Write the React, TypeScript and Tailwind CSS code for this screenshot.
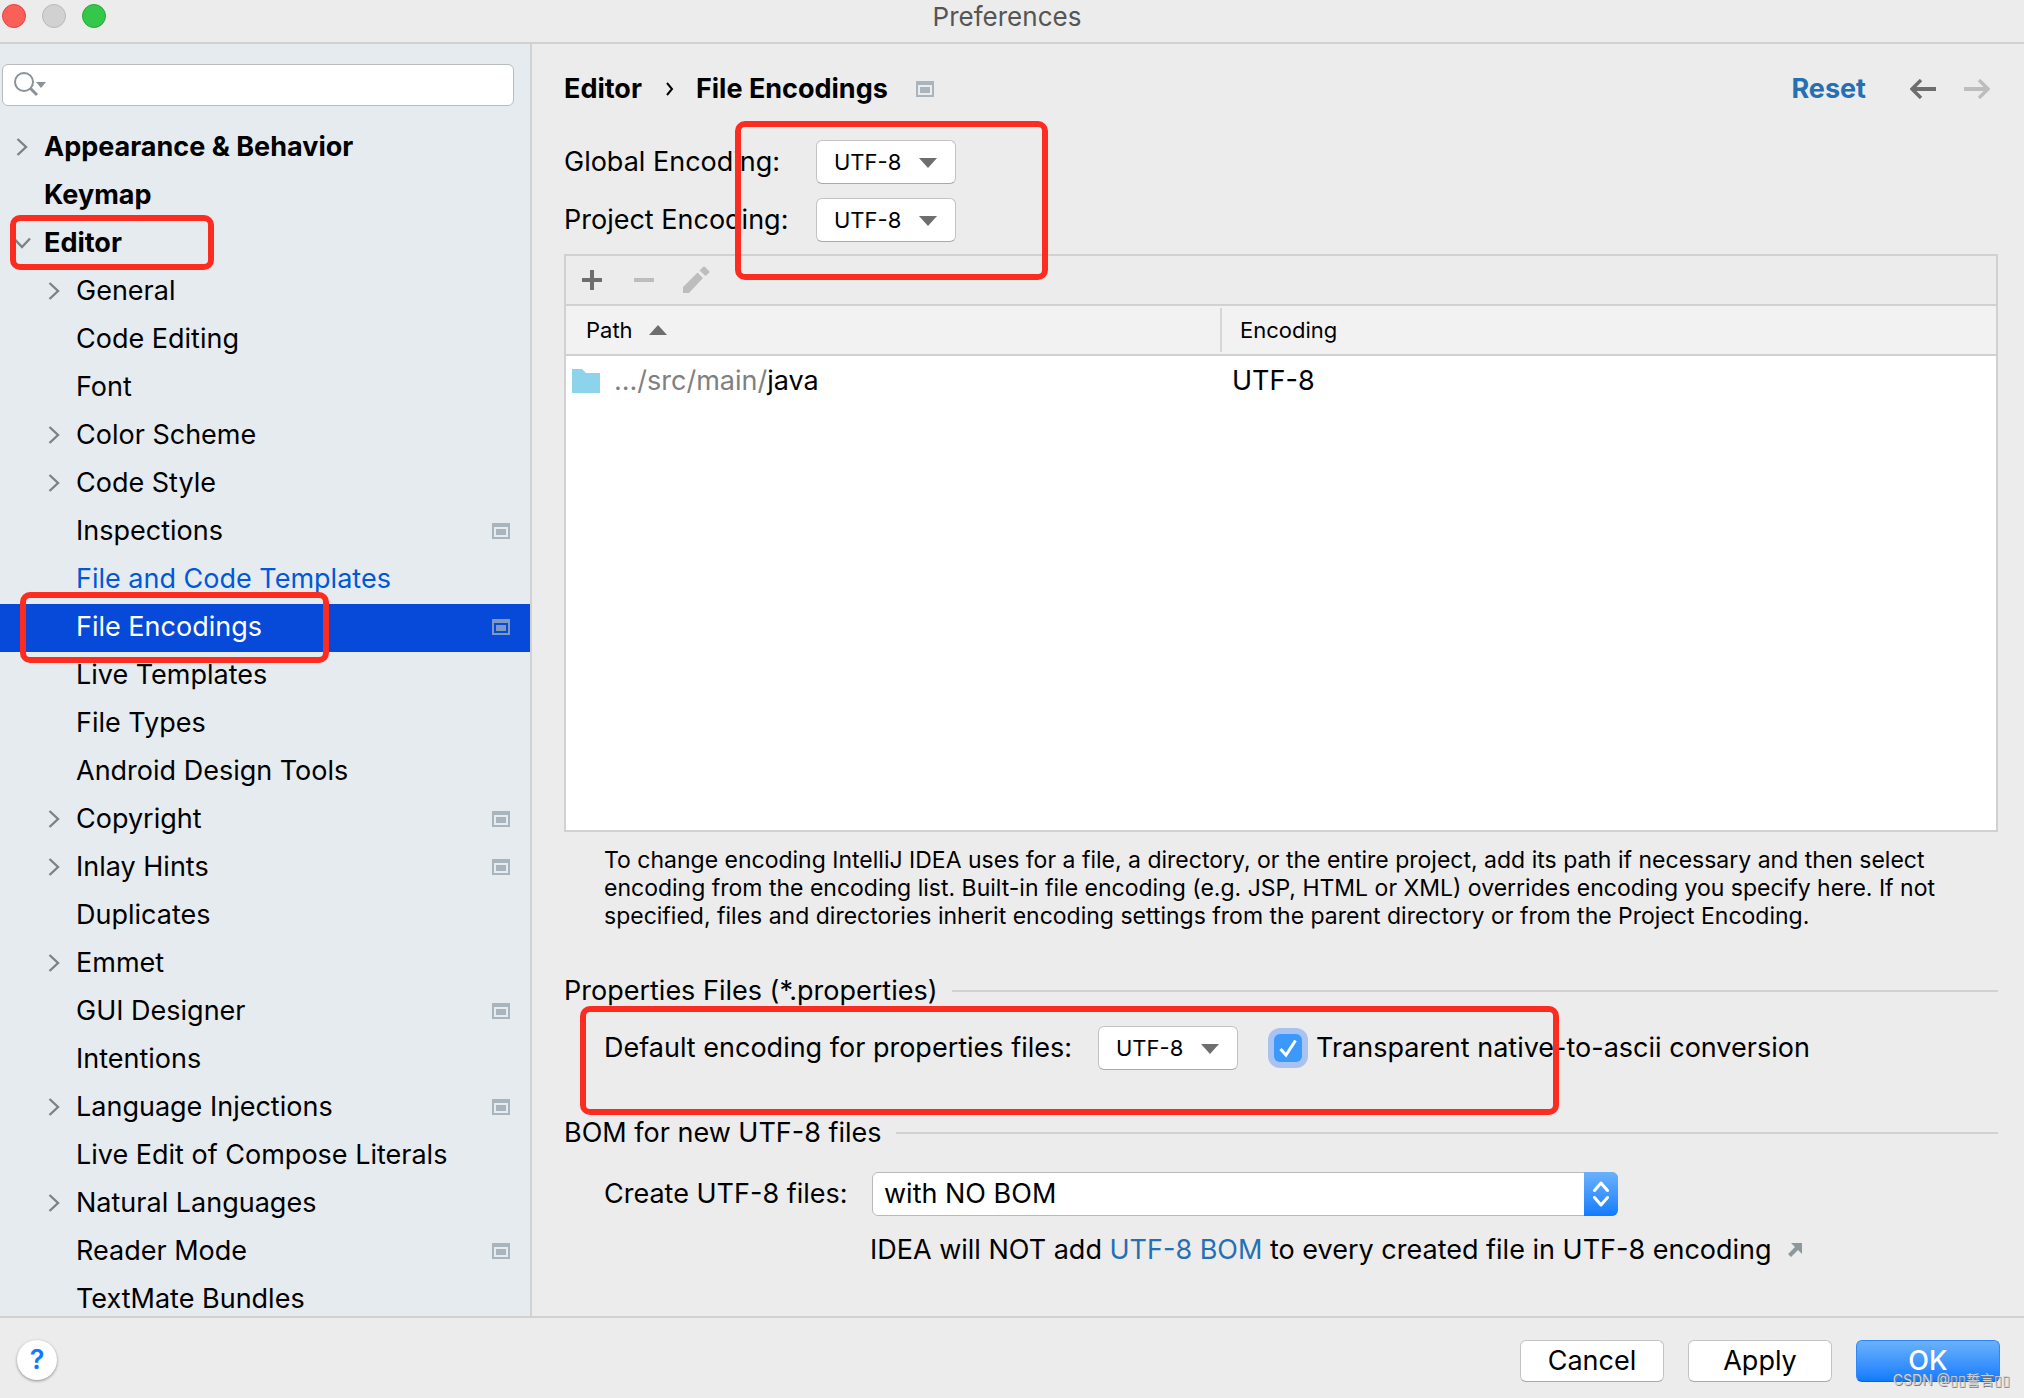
import { useState } from "react";
import type { ReactNode } from "react";

type TreeItem = {
  label: string;
  level: 0 | 1;
  arrow?: "right" | "down";
  project?: boolean;
  modified?: boolean;
};

const treeItems: TreeItem[] = [
  { label: "Appearance & Behavior", level: 0, arrow: "right" },
  { label: "Keymap", level: 0 },
  { label: "Editor", level: 0, arrow: "down" },
  { label: "General", level: 1, arrow: "right" },
  { label: "Code Editing", level: 1 },
  { label: "Font", level: 1 },
  { label: "Color Scheme", level: 1, arrow: "right" },
  { label: "Code Style", level: 1, arrow: "right" },
  { label: "Inspections", level: 1, project: true },
  { label: "File and Code Templates", level: 1, modified: true },
  { label: "File Encodings", level: 1, project: true },
  { label: "Live Templates", level: 1 },
  { label: "File Types", level: 1 },
  { label: "Android Design Tools", level: 1 },
  { label: "Copyright", level: 1, arrow: "right", project: true },
  { label: "Inlay Hints", level: 1, arrow: "right", project: true },
  { label: "Duplicates", level: 1 },
  { label: "Emmet", level: 1, arrow: "right" },
  { label: "GUI Designer", level: 1, project: true },
  { label: "Intentions", level: 1 },
  { label: "Language Injections", level: 1, arrow: "right", project: true },
  { label: "Live Edit of Compose Literals", level: 1 },
  { label: "Natural Languages", level: 1, arrow: "right" },
  { label: "Reader Mode", level: 1, project: true },
  { label: "TextMate Bundles", level: 1 },
];

const ProjectIcon = ({ className }: { className: string }) => (
  <svg width="18" height="16" viewBox="0 0 18 16" fill="currentColor" className={className}>
    <path fillRule="evenodd" d="M0 0h18v16H0zM2 4v10h14V4z" />
    <path d="M4 6h10v6H4z" />
  </svg>
);

const TreeArrow = ({ direction }: { direction: "right" | "down" }) => (
  <svg width="18" height="18" viewBox="0 0 18 18" fill="none" stroke="#7f8183" strokeWidth="2.4">
    <path d={direction === "right" ? "M4.500 1 13 9 4.500 17" : "M1 4.500 9 13 17 4.500"} />
  </svg>
);

const TreeRow = ({
  item,
  selected,
  onSelect,
}: {
  item: TreeItem;
  selected: boolean;
  onSelect: () => void;
}) => {
  const textColor = selected
    ? "text-white"
    : item.modified
      ? "text-[#0058d9]"
      : "text-black";

  return (
    <li>
      <button
        type="button"
        onClick={onSelect}
        className={`flex h-12 w-full items-center pr-5 pb-0.5 text-left ${textColor} ${
          item.level === 0 ? "pl-1.5 font-bold" : "pl-[38px]"
        } ${selected ? "bg-[#0749d9]" : ""}`}
      >
        <span className="mr-1.5 flex w-8 justify-center">
          {item.arrow && <TreeArrow direction={item.arrow} />}
        </span>
        <span className="flex-1 whitespace-nowrap">{item.label}</span>
        {item.project && (
          <ProjectIcon className={selected ? "text-[#7f98bd]" : "text-[#a9b5bc]"} />
        )}
      </button>
    </li>
  );
};

const Triangle = ({ up, className = "" }: { up?: boolean; className?: string }) => (
  <svg width="18" height="10" viewBox="0 0 18 10" fill="#6e6e6e" className={className}>
    <path d={up ? "M0 10 9 0l9 10z" : "M0 0h18L9 10z"} />
  </svg>
);

const EncodingSelect = ({ id }: { id: string }) => (
  <div className="relative w-[140px]">
    <select
      id={id}
      defaultValue="UTF-8"
      className="h-11 w-full appearance-none rounded-md border border-[#c3c3c3] border-b-[#a9a9a9] bg-white pl-[17px] text-[22px]"
    >
      <option>UTF-8</option>
      <option>ISO-8859-1</option>
      <option>US-ASCII</option>
    </select>
    <Triangle className="pointer-events-none absolute top-[18px] right-[19px]" />
  </div>
);

const Section = ({ title }: { title: string }) => (
  <div className="flex h-8 items-center gap-3.5">
    <h2 className="whitespace-nowrap">{title}</h2>
    <div className="h-0.5 flex-1 bg-[#d1d1d1]" />
  </div>
);

const Highlight = ({ className }: { className: string }) => (
  <div
    className={`pointer-events-none absolute rounded-[10px] border-6 border-[#fc2d20] ${className}`}
  />
);

const DialogButton = ({ primary, children }: { primary?: boolean; children: ReactNode }) => (
  <button
    type="button"
    className={`h-[42px] w-36 rounded-md border ${
      primary
        ? "border-[#2f86f5] border-b-[#0a62e6] bg-linear-to-b from-[#69b1fa] to-[#0d7bff] font-medium text-white"
        : "border-[#c3c3c3] border-b-[#a9a9a9] bg-white"
    }`}
  >
    {children}
  </button>
);

const Sidebar = () => {
  const [selected, setSelected] = useState("File Encodings");

  return (
    <aside className="relative w-[532px] shrink-0 overflow-hidden border-r-2 border-[#d1d1d1] bg-[#e6ebef]">
      <div className="relative mt-5 mr-4 ml-0.5">
        <input
          type="text"
          aria-label="Search settings"
          className="block h-[42px] w-full rounded-md border border-[#b9bcbf] bg-white pr-3 pl-12 outline-none"
        />
        <svg
          width="34"
          height="26"
          viewBox="0 0 34 26"
          fill="none"
          className="pointer-events-none absolute top-2 left-3"
        >
          <circle cx="10" cy="10" r="9" stroke="#87929a" strokeWidth="2" />
          <path d="m16 16 7 7" stroke="#87929a" strokeWidth="3" />
          <path d="M22 10h10l-5 6z" fill="#87929a" />
        </svg>
      </div>
      <ul className="mt-[18px]">
        {treeItems.map((item) => (
          <TreeRow
            key={item.label}
            item={item}
            selected={item.label === selected}
            onSelect={() => setSelected(item.label)}
          />
        ))}
      </ul>
      <Highlight className="top-[171px] left-2.5 h-[55px] w-[204px]" />
      <Highlight className="top-[548px] left-5 h-[71px] w-[309px]" />
    </aside>
  );
};

const EncodingTable = () => (
  <div className="mt-3 flex min-h-0 flex-1 flex-col border-2 border-[#d1d1d1] bg-white">
    <div className="flex h-[50px] items-center border-b-2 border-[#d1d1d1] bg-[#ececec] pl-4">
      <button type="button" aria-label="Add" className="mr-8">
        <svg width="20" height="20" viewBox="0 0 20 20" fill="#6e6e6e">
          <path d="M8 0h4v8h8v4h-8v8H8v-8H0V8h8z" />
        </svg>
      </button>
      <button type="button" aria-label="Remove" className="mr-7">
        <svg width="20" height="20" viewBox="0 0 20 20" fill="#bdbdbd">
          <path d="M0 8h20v4H0z" />
        </svg>
      </button>
      <button type="button" aria-label="Edit">
        <svg width="28" height="28" viewBox="0 0 28 28" fill="#bdbdbd">
          <path d="M1 21 15.500 6.500 21 12 7 27H1zM17.500 4.500 21 1q1-1 2 0l4 4q1 1 0 2l-3.500 3z" />
        </svg>
      </button>
    </div>
    <table className="w-full table-fixed border-separate border-spacing-0 text-left">
      <thead>
        <tr className="h-[50px] bg-[#f2f2f2] text-[22px]">
          <th
            scope="col"
            className="w-[656px] border-b-2 border-[#d1d1d1] p-0 pl-5 font-normal"
          >
            <span className="flex h-11 items-center gap-4 border-r-2 border-[#d6d6d6]">
              Path
              <Triangle up />
            </span>
          </th>
          <th scope="col" className="border-b-2 border-[#d1d1d1] p-0 pl-[18px] font-normal">
            Encoding
          </th>
        </tr>
      </thead>
      <tbody>
        <tr className="h-[50px]">
          <td className="p-0 pl-1.5">
            <span className="flex items-center gap-3.5">
              <svg width="28" height="24" viewBox="0 0 28 24" fill="#8dd3ec">
                <path d="M0 0h10l4 4h14v20H0z" />
              </svg>
              <span>
                <span className="text-[#808080]">.../src/main/</span>java
              </span>
            </span>
          </td>
          <td className="p-0 pl-2.5">UTF-8</td>
        </tr>
      </tbody>
    </table>
  </div>
);

const App = () => {
  const [transparent, setTransparent] = useState(true);

  return (
    <div className="flex h-screen flex-col overflow-hidden bg-[#ececec] font-['Inter','Noto_Sans_CJK_SC',sans-serif] text-[27px] leading-8 text-black">
      <header className="relative flex h-11 shrink-0 items-start border-b-2 border-[#d1d1d1] pt-1 pl-0.5">
        <div className="flex gap-4">
          <span className="size-6 rounded-full border border-[#e2443f] bg-[#fc5f58]" />
          <span className="size-6 rounded-full border border-[#b9b9b9] bg-[#d1d1d1]" />
          <span className="size-6 rounded-full border border-[#23a936] bg-[#34c84a]" />
        </div>
        <h1 className="absolute inset-x-0 top-0 pr-2.5 text-center text-[26px] leading-[34px] text-[#555555]">
          Preferences
        </h1>
      </header>

      <div className="flex min-h-0 flex-1">
        <Sidebar />

        <main className="flex min-w-0 flex-1 flex-col pt-[19px] pr-[26px] pb-[50px] pl-8">
          <div className="flex h-[52px] items-center font-bold">
            <span>Editor</span>
            <svg
              width="8"
              height="16"
              viewBox="0 0 8 16"
              fill="none"
              stroke="#000000"
              strokeWidth="2"
              className="mr-[22px] ml-6"
            >
              <path d="m1 2 5 6-5 6" />
            </svg>
            <span>File Encodings</span>
            <ProjectIcon className="ml-7 text-[#a9b5bc]" />
            <a href="#reset" className="ml-auto text-[#2470b3]">
              Reset
            </a>
            <button type="button" aria-label="Back" className="ml-11">
              <svg width="26" height="20" viewBox="0 0 26 20" fill="none" stroke="#6e6e6e">
                <path d="M2 10h24" strokeWidth="4" />
                <path d="M11 1 2 10l9 9" strokeWidth="3.400" />
              </svg>
            </button>
            <button type="button" aria-label="Forward" className="mr-2 ml-7">
              <svg width="26" height="20" viewBox="0 0 26 20" fill="none" stroke="#bdbdbd">
                <path d="M0 10h24" strokeWidth="4" />
                <path d="m15 1 9 9-9 9" strokeWidth="3.400" />
              </svg>
            </button>
          </div>

          <div className="relative mt-[25px] flex flex-col gap-3.5">
            <div className="flex items-center">
              <label htmlFor="global" className="w-[252px]">
                Global Encoding:
              </label>
              <EncodingSelect id="global" />
            </div>
            <div className="flex items-center">
              <label htmlFor="project" className="w-[252px]">
                Project Encoding:
              </label>
              <EncodingSelect id="project" />
            </div>
            <Highlight className="-top-[19px] left-[171px] h-[159px] w-[313px]" />
          </div>

          <EncodingTable />

          <p className="mt-3.5 pl-10 text-[23px] leading-7">
            To change encoding IntelliJ IDEA uses for a file, a directory, or the entire project, add its path if necessary and then select
            <br />
            encoding from the encoding list. Built-in file encoding (e.g. JSP, HTML or XML) overrides encoding you specify here. If not
            <br />
            specified, files and directories inherit encoding settings from the parent directory or from the Project Encoding.
          </p>

          <section className="mt-[45px]">
            <Section title="Properties Files (*.properties)" />
            <div className="relative mt-[19px] flex items-center pl-10">
              <label htmlFor="properties" className="w-[494px] whitespace-nowrap">
                Default encoding for properties files:
              </label>
              <EncodingSelect id="properties" />
              <span className="relative ml-9 flex">
                <input
                  id="transparent"
                  type="checkbox"
                  checked={transparent}
                  onChange={(e) => setTransparent(e.target.checked)}
                  className="size-7 appearance-none rounded-md bg-white ring-6 ring-[#a8c3f2] checked:bg-[#3b99fc]"
                />
                <svg
                  width="28"
                  height="28"
                  viewBox="0 0 28 28"
                  fill="none"
                  stroke="#ffffff"
                  strokeWidth="3"
                  className="pointer-events-none absolute inset-0"
                >
                  <path d="m6.500 15 5.500 6L21.500 6.500" />
                </svg>
              </span>
              <label htmlFor="transparent" className="ml-3.5 whitespace-nowrap">
                Transparent native-to-ascii conversion
              </label>
              <Highlight className="-top-5 left-4 h-[109px] w-[979px]" />
            </div>
          </section>

          <section className="mt-[47px]">
            <Section title="BOM for new UTF-8 files" />
            <div className="mt-[23px] flex items-center pl-10">
              <label htmlFor="bom" className="w-[268px] whitespace-nowrap">
                Create UTF-8 files:
              </label>
              <div className="relative w-[746px]">
                <select
                  id="bom"
                  defaultValue="with NO BOM"
                  className="block h-11 w-full appearance-none rounded-md border border-[#b9b9b9] bg-white pl-[11px]"
                >
                  <option>with NO BOM</option>
                  <option>with BOM</option>
                </select>
                <span className="pointer-events-none absolute inset-y-0 right-0 flex w-[34px] items-center justify-center rounded-r-md bg-linear-to-b from-[#69b1fa] to-[#0d7bff]">
                  <svg
                    width="18"
                    height="26"
                    viewBox="0 0 18 26"
                    fill="none"
                    stroke="#ffffff"
                    strokeWidth="3"
                    strokeLinecap="round"
                    strokeLinejoin="round"
                  >
                    <path d="m2.500 9.500 6.500-7.500 6.500 7.500M2.500 16.500 9 24l6.500-7.500" />
                  </svg>
                </span>
              </div>
            </div>
            <p className="mt-[18px] flex items-center pl-[306px] whitespace-nowrap">
              <span>
                IDEA will NOT add{" "}
                <a href="#bom" className="text-[#2470b3]">
                  UTF-8 BOM
                </a>{" "}
                to every created file in UTF-8 encoding
              </span>
              <svg width="14" height="14" viewBox="0 0 14 14" fill="#8c979e" className="ml-4">
                <path d="M3 0h11v11l-4-4-7 7-3-3 7-7z" />
              </svg>
            </p>
          </section>
        </main>
      </div>

      <footer className="relative flex h-[82px] shrink-0 items-start gap-6 border-t-2 border-[#d1d1d1] pt-[22px] pr-6 pl-[17px]">
        <button
          type="button"
          aria-label="Help"
          className="mr-auto flex size-10 items-center justify-center rounded-full bg-white font-semibold text-[#0a7aff] shadow-[0_1px_3px_rgba(0,0,0,0.4)]"
        >
          ?
        </button>
        <DialogButton>Cancel</DialogButton>
        <DialogButton>Apply</DialogButton>
        <DialogButton primary>OK</DialogButton>
        <span className="absolute right-3.5 bottom-1.5 text-sm leading-6 text-[#d4d4d4] [text-shadow:1px_1px_0_#7c7c7c]">
          CSDN @▯▯誓言▯▯
        </span>
      </footer>
    </div>
  );
};

export default App;
